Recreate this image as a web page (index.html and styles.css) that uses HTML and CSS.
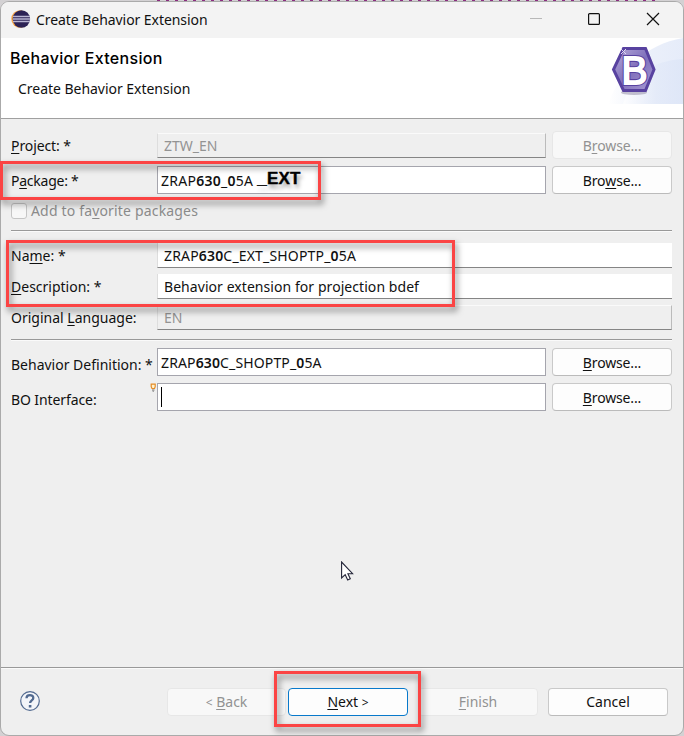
FILE: index.html
```
<!DOCTYPE html>
<html lang="en">
<head>
<meta charset="utf-8">
<title>Create Behavior Extension</title>
<link rel="stylesheet" href="styles.css">
</head>
<body>
<div class="desktop">
<div class="window">
  <header class="titlebar">
    <svg class="app-icon" width="20" height="20" viewBox="0 0 20 20"><circle cx="9" cy="10" r="8.700" fill="#f7a343"/><circle cx="10.400" cy="10" r="8.700" fill="#2c2255"/><path d="M2 7.500h17M2 10h17M2 12.500h17" stroke="#b9b5d2" stroke-width="1.500"/></svg>
    <span class="title">Create Behavior Extension</span>
    <svg class="controls" width="130" height="14" viewBox="0 0 130 14" fill="none"><path d="M0 6.500h12" stroke="#b8b8b8"/><rect x="58.600" y="1.600" width="10.800" height="10.800" rx="1" stroke="#111" stroke-width="1.200"/><path d="M117 1l12 12M129 1L117 13" stroke="#111" stroke-width="1.200"/></svg>
  </header>
  <section class="banner">
    <div class="banner-text">
      <h1>Behavior Extension</h1>
      <p>Create Behavior Extension</p>
    </div>
    <svg class="logo" width="75" height="66" viewBox="0 0 75 66">
      <defs>
        <linearGradient id="sky" x1="0" x2="1"><stop offset="0" stop-color="#fff"/><stop offset=".55" stop-color="#e2e9f8"/><stop offset="1" stop-color="#dbe4f7"/></linearGradient>
        <linearGradient id="gem" x1="0" y1="0" x2="1" y2="1"><stop offset="0" stop-color="#b9addb"/><stop offset=".5" stop-color="#8070bb"/><stop offset="1" stop-color="#aa9bd6"/></linearGradient>
      </defs>
      <path d="M0 66C14 30 37 7 75 0v66z" fill="url(#sky)" opacity=".7"/>
      <path d="M15 66C24 37 43 23 75 21v45z" fill="url(#sky)" opacity=".7"/>
      <ellipse cx="26" cy="54.500" rx="13" ry="2.500" fill="#8b86a0" opacity=".5"/>
      <path d="M15.500 10.500h22l8.500 21-8.500 21h-22l-10-21z" fill="url(#gem)" stroke="#5842a0" stroke-width="3"/>
      <path d="M13 11l5 5m0-5l-5 5" stroke="#ded8f2" stroke-width="1"/>
      <text class="letter letter-edge" x="13.500" y="45.500">B</text><text class="letter" x="13.500" y="45.500">B</text>
    </svg>
  </section>
  <main class="form">
    <div class="row r-project"><label class="t-project"><u>P</u>roject: *</label><div class="field flat off">ZTW_EN</div><div class="button off">B<u>r</u>owse...</div></div>
    <div class="row r-package"><label class="t-package">P<u>a</u>ckage: *</label><div class="field boxed"><span class="v-package">ZRAP<b>630</b>_<b>0</b>5A</span><strong class="suffix">_EXT</strong></div><div class="button">Bro<u>w</u>se...</div></div>
    <div class="check"><i class="checkbox"></i><span>Add to fa<u>v</u>orite packages</span></div>
    <div class="row wide r-name"><label class="t-name">Na<u>m</u>e: *</label><div class="field flat"><span class="v-name">ZRAP<b>630</b>C_EXT_SHOPTP_<b>0</b>5A</span></div></div>
    <div class="row wide r-desc"><label class="t-desc"><u>D</u>escription: *</label><div class="field flat"><span class="v-desc">Behavior extension for projection bdef</span></div></div>
    <div class="row wide r-lang"><label class="t-lang">Original <u>L</u>anguage:</label><div class="field flat off">EN</div></div>
    <div class="row r-def"><label class="t-def">Behavior Definition: *</label><div class="field boxed"><span class="v-def">ZRAP<b>630</b>C_SHOPTP_<b>0</b>5A</span></div><div class="button"><u>B</u>rowse...</div></div>
    <div class="row r-bo"><label class="t-bo">BO Interface:</label><div class="field boxed"><i class="caret"></i>
      <svg class="hint" width="7" height="9" viewBox="0 0 7 9"><path d="M1.200 1.200h4v2.500L4.500 5.500H2L1.200 3.700z" fill="#fff2cf" stroke="#e58c25" stroke-width="1.200"/><path d="M2 7h2.500M2.600 8.200h1.300" stroke="#777"/></svg></div><div class="button"><u>B</u>rowse...</div></div>
  </main>
  <footer class="footer">
    <svg class="help" width="20" height="20" viewBox="0 0 20 20"><circle cx="10" cy="10" r="9.300" fill="#f3f5f9" stroke="#526a90" stroke-width="1.200"/><path d="M6.500 7.300C6.500 3 13.300 3.200 13.300 6.900c0 2.500-3.200 2.500-3.200 5.200" fill="none" stroke="#526a90" stroke-width="2.300"/><rect x="8.800" y="14" width="2.600" height="2.500" fill="#526a90"/></svg>
    <div class="button off back"><span><small>&lt;</small> <u>B</u>ack</span></div>
    <div class="button next"><span><u>N</u>ext <small>&gt;</small></span></div>
    <div class="button off finish"><u>F</u>inish</div>
    <div class="button cancel">Cancel</div>
  </footer>
</div>
<div class="mark mark-package"></div>
<div class="mark mark-name"></div>
<div class="mark mark-next"></div>
<svg class="cursor" width="13" height="20" viewBox="0 0 13 20"><path d="M.6 1v16l3.600-3.300 2.500 5.200 2.600-1.200-2.400-5h4.700z" fill="#fff" stroke="#222438" stroke-width="1.100"/></svg>
</div>
</body>
</html>
```
FILE: styles.css
```
* { box-sizing: border-box; }
body { margin: 0; background: #d3d1d3; font-family: "Noto Sans", sans-serif; font-size: 14px; color: #111; }
.desktop { position: relative; width: 684px; height: 736px; overflow: hidden; padding-top: 1px; background: repeating-linear-gradient(90deg, #8b2c80 0 3px, #d3d1d3 3px 9px) 157px 0 / 500px 1px no-repeat #d3d1d3; }
.window { display: flex; flex-direction: column; width: 684px; height: 735px; border: 1px solid #aaa; border-radius: 9px; overflow: hidden; background: #efefef; }
.titlebar { display: flex; align-items: center; height: 36px; padding: 0 23px 2px 10px; background: #f3f3f3; }
.title { margin-left: 5px; white-space: nowrap; letter-spacing: -.06px; }
.controls { margin-left: auto; }
.banner { display: flex; justify-content: space-between; height: 81px; background: #fff; border-bottom: 1px solid #a0a0a0; }
.banner-text { padding: 10px 0 0 9px; }
h1 { margin: 0; font: 500 16px/21px Inter, sans-serif; color: #000; letter-spacing: .33px; }
p { margin: 9px 0 0 8px; line-height: 22px; letter-spacing: -.03px; }
.letter { font: 400 39px "Liberation Sans", sans-serif; fill: #fff; stroke: #fff; stroke-width: 1.800px; }
.letter-edge { stroke: #5842a0; stroke-width: 4px; }
.form { padding: 12px 11px 0 10px; }
.row { display: grid; grid-template-columns: 146px 389px 120px; column-gap: 0; height: 28px; align-items: center; }
.row .button { margin-left: 6px; width: 120px; letter-spacing: -.15px; }
.wide { grid-template-columns: 146px 515px; height: 25px; }
label { white-space: nowrap; line-height: 24px; padding-top: 2px; }
.t-project { letter-spacing: -.1px; }
.t-package { letter-spacing: -.25px; }
.t-bo { letter-spacing: -.1px; }
u { text-decoration-thickness: 1px; text-underline-offset: 2px; }
b { font-weight: 600; }
.field { display: flex; align-items: center; position: relative; white-space: nowrap; background: #fff; }
.v-package { letter-spacing: .27px; }
.v-name { letter-spacing: .17px; }
.v-desc { letter-spacing: .06px; }
.v-def { letter-spacing: .13px; }
.flat { height: 25px; padding-left: 6px; border-bottom: 1px solid #858585; border-left: 1px solid #ddd; }
.boxed { height: 28px; padding-left: 3px; border: 1px solid #a5a5ad; }
.flat.off { border-top: 1px solid #fafafa; border-right: 1px solid #bbb; background: #efefef; color: #939393; }
.button { display: flex; align-items: center; justify-content: center; white-space: pre; height: 28px; border: 1px solid #c9c9c9; border-bottom-color: #bbb; border-radius: 4px; background: #fdfdfd; }
.button.off { color: #929292; background: #f8f8f8; border-color: #e7e7e7; }
.r-package { margin-top: 7px; }
.suffix { font: 700 17px/20px "Liberation Sans", sans-serif; color: #000; margin: -2px 0 0 4px; text-shadow: 2px 4px 4px #999; letter-spacing: .2px; -webkit-text-stroke: .4px #000; }
.check { display: flex; align-items: center; height: 37px; border-bottom: 1px solid #999; color: #8b8b8b; box-shadow: 0 1px #fafafa; padding-bottom: 3px; letter-spacing: .17px; }
.checkbox { width: 16px; height: 16px; border: 1px solid #c5c5c5; border-radius: 3px; background: #f7f7f7; margin-right: 4px; }
.r-name { margin-top: 12px; }
.r-desc, .r-lang { margin-top: 6px; }
.wide label { padding-top: 0; }
.r-def { margin-top: 17px; position: relative; }
.r-def::before { content: ""; position: absolute; left: 0; right: 0; top: -8px; height: 2px; background: linear-gradient(#999 50%, #fafafa 50%); }
.r-bo { margin-top: 7px; }
.r-def label, .r-bo label { padding-top: 6px; }
.caret { width: 1px; height: 20px; background: #000; }
.hint { position: absolute; left: -8px; top: -1px; }
.footer { display: flex; align-items: center; margin-top: auto; height: 68px; padding: 0 15px 0 19px; border-top: 1px solid #999; box-shadow: inset 0 1px #fafafa; }
.footer .button { width: 120px; }
.footer .help { margin-top: -2px; }
.footer .back { margin-left: 127px; width: 119px; }
.footer .next { margin-left: 2px; border-color: #0879cb; }
.footer .finish { margin-left: 10px; }
.footer .cancel { margin-left: 10px; }
small { font-size: 12px; }
.mark { position: absolute; border: 3px solid #fb4444; filter: drop-shadow(2px 4px 3px rgba(0,0,0,.5)); }
.mark-package { left: 0; top: 161px; width: 321px; height: 39px; }
.mark-name { left: 6px; top: 240px; width: 449px; height: 67px; }
.mark-next { left: 274px; top: 671px; width: 147px; height: 56px; }
.cursor { position: absolute; left: 341px; top: 561px; }
```
